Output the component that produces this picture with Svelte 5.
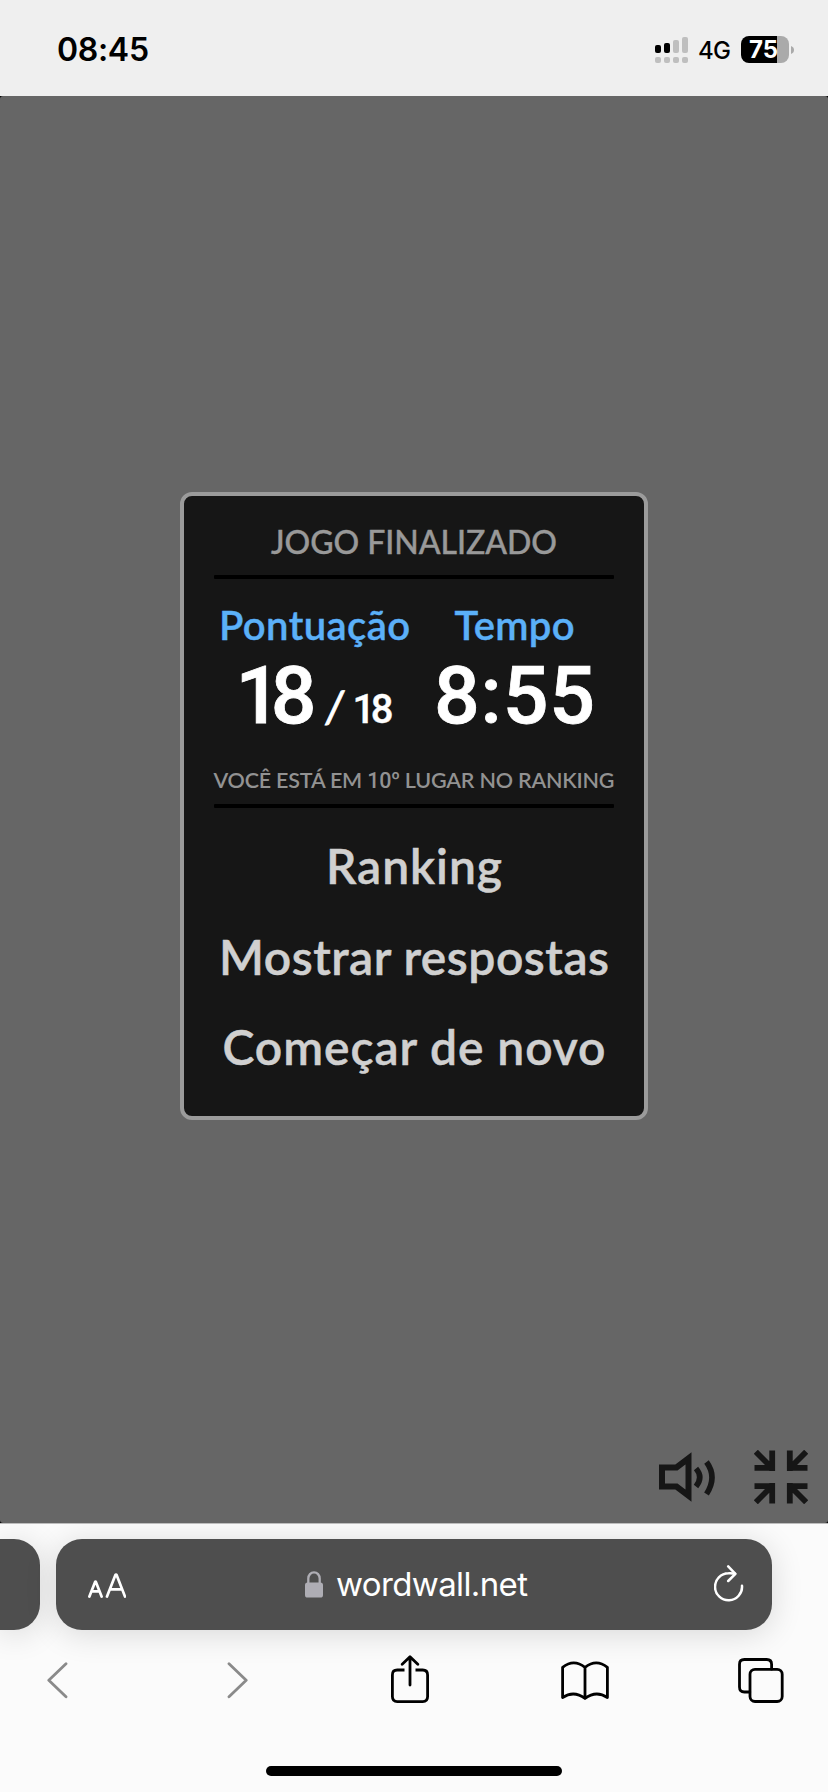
<script>
  // Spreads a line's letters so that the line takes the given width.
  function fit(node, width) {
    const natural = node.getBoundingClientRect().width;
    const gap = (width - natural) / (node.textContent.length - 1);
    node.style.letterSpacing = `${gap}px`;
    node.style.marginRight = `${-gap}px`;
  }

  const actions = [
    { label: 'Ranking', width: 176 },
    { label: 'Mostrar respostas', width: 390 },
    { label: 'Começar de novo', width: 383 },
  ];
  const bars = [
    { h: 8, on: true },
    { h: 10, on: true },
    { h: 13, on: false },
    { h: 16, on: false },
  ];
</script>

<div class="phone">
  <header class="status">
    <span class="clock"><span use:fit={92}>08:45</span></span>
    <div class="indicators">
      <svg class="signal" width="33" height="26" viewBox="0 0 33 26">
        {#each bars as bar, i}
          <rect x={i * 9} y={16 - bar.h} width="6" height={bar.h} rx="2" fill={bar.on ? '#000' : '#bfbfbf'} />
          <rect x={i * 9} y="20" width="6" height="6" rx="2" fill="#bfbfbf" />
        {/each}
      </svg>
      <span class="network"><span use:fit={33}>4G</span></span>
      <div class="battery"><span use:fit={29}>75</span></div>
      <svg class="knob" width="3" height="8" viewBox="0 0 3 8"><path d="M0 0Q3 1.2 3 4T0 8z" fill="#aaa" /></svg>
    </div>
  </header>

  <main class="page">
    <div class="screen">
      <section class="card">
        <h1><span use:fit={286}>JOGO FINALIZADO</span></h1>
        <hr />
        <div class="stats">
          <div class="stat">
            <div class="label"><span use:fit={191}>Pontuação</span></div>
            <div class="value score">
              <span class="got" use:fit={81}>18</span>
              <span class="slash">/</span>
              <span class="total" use:fit={41}>18</span>
            </div>
          </div>
          <div class="stat">
            <div class="label"><span use:fit={120}>Tempo</span></div>
            <div class="value"><span use:fit={161}>8:55</span></div>
          </div>
        </div>
        <p class="place"><span use:fit={401}>VOCÊ ESTÁ EM <span class="rank">10</span>º LUGAR NO RANKING</span></p>
        <hr />
        <nav class="actions">
          {#each actions as action}
            <button><span use:fit={action.width}>{action.label}</span></button>
          {/each}
        </nav>
      </section>
      <div class="tools">
        <svg width="58" height="50" viewBox="0 0 58 50" fill="none" stroke="#161616" stroke-width="6">
          <path d="M4 15.5H18.5L30.5 6.3V43.7L18.5 34.5H4z" />
          <path d="M38 16.5Q45.5 25 38 34.5M48.5 10Q59.5 25 48.5 42" stroke-width="5.6" />
        </svg>
        <svg width="54" height="54" viewBox="0 0 54 54" fill="none" stroke="#161616" stroke-width="5.8">
          <path d="M18.2 .5V21M.5 17.9H21M1.8 1.8L17.5 17.5" />
          <path d="M35.8 .5V21M53.5 17.9H33M52.2 1.8L36.5 17.5" />
          <path d="M18.2 53.5V33M.5 36.1H21M1.8 52.2L17.5 36.5" />
          <path d="M35.8 53.5V33M53.5 36.1H33M52.2 52.2L36.5 36.5" />
        </svg>
      </div>
    </div>
  </main>

  <footer class="browser">
    <div class="tabs">
      <div class="previous"></div>
      <div class="address">
        <div class="reader">
          <svg width="38" height="25" viewBox="0 0 38 25" fill="none" stroke="#fff" stroke-width="2.7" stroke-linecap="round" stroke-linejoin="round">
            <path d="M1.4 23.6L7 9.2Q7.5 8.2 8 9.2L13.6 23.6M3.8 18.3H11.2" />
            <path d="M19 23.6L27.3 2.2Q28 .8 28.7 2.2L37 23.6M22.2 16.3H33.8" />
          </svg>
        </div>
        <div class="site">
          <svg width="18" height="27" viewBox="0 0 18 27">
            <path d="M3.3 13V7.5a5.7 6.2 0 0 1 11.4 0V13" fill="none" stroke="#aeadb4" stroke-width="2.3" />
            <rect y="11.5" width="18" height="15" rx="2.6" fill="#aeadb4" />
          </svg>
          <span class="host"><span use:fit={192}>wordwall.net</span></span>
        </div>
        <svg class="reload" width="30" height="37" viewBox="0 0 30 37" fill="none" stroke="#fff" stroke-width="2.5" stroke-linecap="round" stroke-linejoin="round">
          <path d="M28 20.8A13.5 13.5 0 1 1 14.5 8.3Q18 8 21 8.8" />
          <path d="M14.2 1.4L21.4 8.8L14.2 16" />
        </svg>
      </div>
    </div>
    <div class="toolbar">
      <svg width="21" height="37" viewBox="0 0 21 37" class="muted"><path d="M19 1.8L1.8 18.3L19 34.8" /></svg>
      <svg width="21" height="37" viewBox="0 0 21 37" class="muted forward"><path d="M2 1.8L19.2 18.3L2 34.8" /></svg>
      <svg class="share" width="38" height="48" viewBox="0 0 38 48">
        <path d="M13.5 15H6.3Q1.4 15 1.4 20V41.5Q1.4 46.6 6.3 46.6H31.7Q36.6 46.6 36.6 41.5V20Q36.6 15 31.7 15H24.5" />
        <path d="M19 30V1.8M11.2 9.3L19 1.7L26.8 9.3" />
      </svg>
      <svg class="book" width="48" height="40" viewBox="0 0 48 40">
        <path d="M24 6.4V37.4M24 37.4Q12.8 29 1.6 36.5V6.3Q12.8-2.5 24 6.4Q35.2-2.5 46.4 6.3V36.5Q35.2 29 24 37.4" />
      </svg>
      <svg class="windows" width="46" height="45" viewBox="0 0 46 45">
        <path d="M11.8 34H6.4Q1.5 34 1.5 29V6.4Q1.5 1.5 6.4 1.5H28.7Q33.6 1.5 33.6 6.4V11.2" />
        <rect x="12" y="11.3" width="32.2" height="32.2" rx="5" />
      </svg>
    </div>
    <div class="home"></div>
  </footer>
</div>

<style>
  :global(body) {
    margin: 0;
    background: #fbfbfb;
  }
  .phone {
    width: 828px;
    height: 1792px;
    display: flex;
    flex-direction: column;
    overflow: hidden;
    font-family: Lato, sans-serif;
  }
  span {
    display: inline-block;
    white-space: pre;
  }
  svg {
    display: block;
    flex: none;
  }
  .status {
    box-sizing: border-box;
    height: 96px;
    flex: none;
    display: flex;
    justify-content: space-between;
    padding: 0 34px 0 57px;
    background: #efefef;
    color: #000;
    font-family: Inter, sans-serif;
  }
  .clock {
    font-size: 32px;
    font-weight: 600;
    line-height: 100px;
  }
  .indicators {
    display: flex;
    align-items: flex-start;
  }
  .signal {
    margin-top: 37px;
  }
  .network {
    margin-left: 10px;
    width: 43px;
    font-size: 24px;
    font-weight: 500;
    line-height: 101px;
  }
  .battery {
    box-sizing: border-box;
    width: 48px;
    height: 27px;
    margin-top: 36px;
    padding-left: 8px;
    border-radius: 8px;
    background: linear-gradient(90deg, #000 36px, #aaa 36px);
    color: #fff;
    font-size: 24px;
    font-weight: 700;
    line-height: 27px;
  }
  .knob {
    margin: 46px 0 0 2px;
  }
  .page {
    height: 1427px;
    flex: none;
    background: #000;
  }
  .screen {
    box-sizing: border-box;
    height: 1427px;
    padding-top: 396px;
    border-radius: 3px;
    background: #666;
    display: flex;
    flex-direction: column;
    align-items: center;
  }
  .card {
    box-sizing: border-box;
    width: 468px;
    height: 628px;
    padding: 22px 30px 0;
    border: 4px solid #9b9b9b;
    border-radius: 12px;
    background: #161616;
    text-align: center;
  }
  h1 {
    margin: 0 0 9px;
    color: #999;
    font-size: 32px;
    font-weight: 500;
    line-height: 48px;
    -webkit-text-stroke: 0.4px #999;
  }
  hr {
    height: 4px;
    margin: 0;
    border: 0;
    border-radius: 1px;
    background: #000;
  }
  .stats {
    display: grid;
    grid-template-columns: 201px 199px;
    height: 132px;
    margin-top: 22px;
  }
  .stat {
    display: flex;
    flex-direction: column;
    align-items: center;
  }
  .label {
    color: #5bb0f8;
    font-size: 40px;
    font-weight: 600;
    line-height: 48px;
    -webkit-text-stroke: 0.4px #5bb0f8;
  }
  .value {
    height: 80px;
    margin-top: 7px;
    color: #fff;
    font-family: Roboto, sans-serif;
    font-size: 80.5px;
    font-weight: 500;
    line-height: 80px;
    -webkit-text-stroke: 0.8px #fff;
  }
  .score {
    display: flex;
    align-items: baseline;
  }
  .slash {
    width: 24px;
    margin: 0 6px 0 6px;
    font-family: Lato, sans-serif;
    font-size: 44px;
    font-weight: 500;
    line-height: 48px;
    text-align: center;
    transform: skewX(-4deg);
  }
  .total {
    font-size: 40px;
    line-height: 48px;
    -webkit-text-stroke: 0.4px #fff;
  }
  .place {
    display: flex;
    justify-content: center;
    height: 28px;
    margin: 33px 0 10px;
    color: #929292;
    font-size: 21.5px;
    font-weight: 600;
    line-height: 28px;
  }
  .rank {
    font-family: Roboto, sans-serif;
    font-weight: 500;
    line-height: 26px;
  }
  .actions {
    display: flex;
    flex-direction: column;
    align-items: center;
    margin-top: 13px;
  }
  button {
    padding: 0;
    border: 0;
    background: none;
    color: #d0d0d0;
    font: 600 48px/90.5px Lato, sans-serif;
    -webkit-text-stroke: 0.5px #d0d0d0;
  }
  .tools {
    align-self: flex-end;
    display: flex;
    gap: 38px;
    align-items: center;
    margin: 330px 20px 0 0;
  }
  .browser {
    box-sizing: border-box;
    flex: 1;
    border-top: 1px solid #bdbdbd;
    background: #fbfbfb;
    overflow: hidden;
  }
  .tabs {
    display: flex;
    gap: 16px;
    padding-top: 15px;
  }
  .previous,
  .address {
    height: 91px;
    background: #4e4e4e;
    box-shadow: 0 4px 32px rgba(0, 0, 0, 0.14);
  }
  .previous {
    width: 40px;
    border-radius: 0 26px 26px 0;
  }
  .address {
    box-sizing: border-box;
    width: 716px;
    padding: 0 28px 0 32px;
    border-radius: 26px;
    display: flex;
    align-items: flex-start;
    justify-content: space-between;
  }
  .reader {
    padding-top: 34px;
  }
  .site {
    display: flex;
    gap: 13px;
    margin-left: -7px;
  }
  .site svg {
    margin-top: 32px;
  }
  .host {
    color: #fff;
    font: 400 33px/91px Inter, sans-serif;
  }
  .reload {
    margin-top: 26px;
  }
  .toolbar {
    display: flex;
    height: 48px;
    align-items: center;
    padding-left: 47px;
    margin-top: 25px;
    fill: none;
    stroke: #000;
    stroke-width: 2.8;
    stroke-linecap: round;
    stroke-linejoin: round;
  }
  .toolbar .muted {
    margin-top: 2px;
    stroke: #8a8a8a;
  }
  .toolbar .forward {
    margin-left: 159px;
  }
  .share {
    margin-left: 143px;
  }
  .share path:first-child {
    stroke-linecap: butt;
  }
  .book {
    margin: 3px 0 0 132px;
  }
  .windows {
    margin: 2px 0 0 129px;
  }
  .home {
    width: 296px;
    height: 10px;
    margin: 63px auto 0;
    border-radius: 5px;
    background: #000;
  }
</style>
